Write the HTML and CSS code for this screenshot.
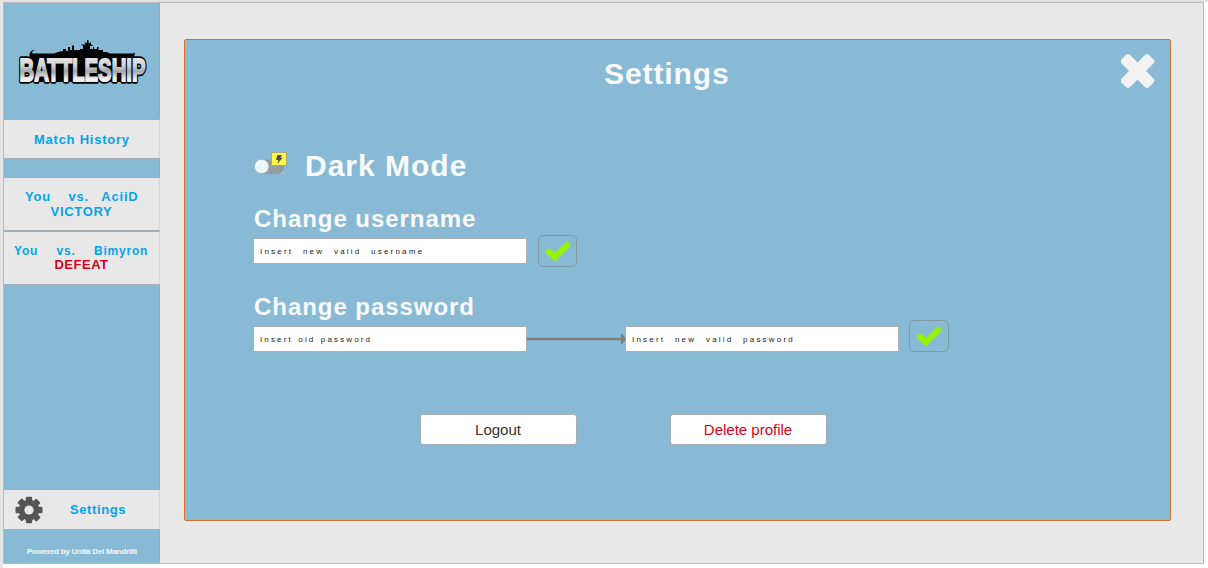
FILE: index.html
```html
<!DOCTYPE html>
<html lang="en">
<head>
<meta charset="utf-8">
<title>Battleship – Settings</title>
<link rel="stylesheet" href="styles.css">
</head>
<body>
<div class="app">
  <aside class="sidebar">
    <div class="brand">
      <svg class="logo" width="136" height="48" viewBox="0 0 136 48" role="img" aria-label="Battleship">
        <defs>
          <linearGradient id="steel" x1="0" y1="0" x2="0" y2="1">
            <stop offset=".2" stop-color="#e4e4e4"/>
            <stop offset=".4" stop-color="#cfd2d4"/>
            <stop offset=".55" stop-color="#a4a7aa"/>
            <stop offset=".76" stop-color="#efefef"/>
          </linearGradient>
        </defs>
        <path fill="#000" d="M14 20 13.500 14 15 11 19 9.500 16 12 16.500 13.500H38L42 12 47 11V9H50V11H52V7H54V10H56V5.500H58V10H64V9H67V5.500H65.500V4.500H70L68 2.500 71 3V0H72.500V3.500L75 2V4.500H76.500V6H74V9H77V7H78V9H81V7H82.500V10H87V12H91L94 13.500H117L119 12.500 118 17 115 20V42H14Z"/>
        <g class="logo-text">
          <text class="logo-edge" x="3.500" y="40.500" textLength="126" lengthAdjust="spacingAndGlyphs">BATTLESHIP</text>
          <text class="logo-face" x="3.500" y="40.500" textLength="126" lengthAdjust="spacingAndGlyphs">BATTLESHIP</text>
        </g>
      </svg>
    </div>
    <div class="side-row history"><span>Match History</span></div>
    <div class="side-gap"></div>
    <div class="side-row match first"><span class="players aciid">You <span class="versus">vs.</span> AciiD</span><span class="result">VICTORY</span></div>
    <div class="side-row match second"><span class="players bimyron">You vs. Bimyron</span><span class="result defeat">DEFEAT</span></div>
    <div class="side-fill"></div>
    <div class="side-row settings">
      <svg class="gear" width="28" height="28" viewBox="-14 -14 28 28">
        <g fill="#555">
          <g id="teeth"><rect x="-3.200" y="-13.300" width="6.400" height="26.600" rx="1.200"/><rect x="-13.500" y="-3.200" width="27" height="6.400" rx="1.200"/></g>
          <use href="#teeth" transform="rotate(45)"/>
          <circle r="10.300"/>
        </g>
        <circle r="4.600" fill="#e8e8e8"/>
      </svg>
      <span>Settings</span>
    </div>
    <div class="powered"><span>Powered by Unità Del Mandrilli</span></div>
  </aside>
  <main class="content">
    <section class="panel">
      <header class="panel-head">
        <h1>Settings</h1>
        <svg class="close" width="34" height="35" viewBox="0 0 34 35">
          <g transform="translate(16.500 17) rotate(45)" fill="#f2f2f2"><rect x="-6" y="-19.500" width="12" height="39" rx="3"/><rect x="-19.500" y="-6" width="39" height="12" rx="3"/></g>
        </svg>
      </header>
      <div class="dark-row">
        <svg width="34" height="24" viewBox="0 0 34 24">
          <path fill="#9ac3d5" d="M2 19H30V22H2Z" opacity=".5"/>
          <rect x="1" y="7.500" width="29" height="14.500" rx="7.250" fill="#939b9f"/>
          <circle cx="7.600" cy="14.500" r="7.200" fill="#edf6fb" stroke="#9eb2bb" stroke-width=".8"/>
          <rect x="17.500" y=".5" width="15" height="13" fill="#fdf84a" stroke="#a9aa78"/>
          <path fill="#4d4d4d" d="M23.300 3H28L26.300 5.800H28.700L23.300 12 24.500 8H22Z"/>
        </svg>
        <h2>Dark Mode</h2>
      </div>
      <h3 class="user-title">Change username</h3>
      <div class="form-row user-row">
        <div class="field">Insert new valid username</div>
        <div class="confirm"><svg width="26" height="20" viewBox="0 0 26 20"><path class="tick" d="M4 11 10 16 22 4.200"/></svg></div>
      </div>
      <h3 class="pass-title">Change password</h3>
      <div class="form-row pass-row">
        <div class="field old">Insert old password</div>
        <svg class="arrow" width="99" height="12" viewBox="0 0 99 12"><path fill="#7d7d7d" d="M0 4.800H94V.5L100 6 94 11.500V7.200H0Z"/></svg>
        <div class="field new">Insert new valid password</div>
        <div class="confirm"><svg width="26" height="20" viewBox="0 0 26 20"><path class="tick" d="M4 11 10 16 22 4.200"/></svg></div>
      </div>
      <div class="actions">
        <button class="btn">Logout</button>
        <button class="btn danger">Delete profile</button>
      </div>
    </section>
  </main>
</div>
</body>
</html>
```
FILE: styles.css
```css
* { box-sizing: border-box; }
html { background: #fff; }
body {
  margin: 0;
  width: 1208px;
  height: 568px;
  overflow: hidden;
  border-top: 2px solid #e2e2e2;
  border-left: 3px solid #e5e5e5;
  font-family: "Liberation Sans", Arial, sans-serif;
}
.app {
  display: flex;
  width: 1201px;
  height: 562px;
  border: 1px solid #bababa;
  background: #e8e8e8;
}
.sidebar {
  display: flex;
  flex-direction: column;
  width: 156px;
  background: #88bad6;
  border-right: 1px solid #9aaab4;
  color: #05a2ec;
  font-weight: bold;
  font-size: 13px;
  letter-spacing: .8px;
  white-space: nowrap;
}
.brand { height: 116px; padding: 37px 0 0 12px; }
.logo { display: block; overflow: visible; }
.logo-text { font: bold 32px "Liberation Sans", Arial, sans-serif; letter-spacing: 0; }
.logo-edge { fill: #000; stroke: #000; stroke-width: 5.5px; stroke-linejoin: round; }
.logo-face { fill: url(#steel); stroke: url(#steel); stroke-width: 2px; }
.side-row {
  display: flex;
  align-items: center;
  background: #e8e8e8;
  border-top: 1px solid #a3aeb5;
  border-bottom: 1px solid #a3aeb5;
  margin-right: -1px;
  border-right: 1px solid #d4d8da;
}
.history { height: 40px; padding: 1px 0 0 30px; letter-spacing: .75px; }
.side-gap { height: 18px; }
.match { flex-direction: column; line-height: 14px; }
.first { height: 54px; padding-top: 11px; line-height: 15px; }
.second { height: 54px; padding-top: 12px; border-top: 1px solid #a3aeb5; }
.players { align-self: flex-start; }
.aciid { padding-left: 21px; word-spacing: 8.5px; }
.versus { margin-left: 4.5px; }
.bimyron { padding-left: 10px; font-size: 12px; word-spacing: 14.2px; }
.result { letter-spacing: .7px; }
.defeat { color: #d9001b; letter-spacing: .5px; }
.side-fill { flex: 1; }
.settings { height: 41px; padding-left: 11px; gap: 27px; letter-spacing: .6px; }
.powered {
  height: 33px;
  padding: 16px 0 0 23px;
  color: #f4f8fa;
  font-size: 8px;
  line-height: 12px;
  letter-spacing: -.24px;
}
.content { flex: 1; padding: 36px 0 0 24px; }
.panel {
  width: 987px;
  height: 482px;
  border: 1px solid #d2732b;
  border-radius: 2px;
  background: #88bad6;
}
h1, h2, h3 { margin: 0; color: #f8fafb; font-weight: bold; letter-spacing: 1px; white-space: nowrap; }
h1, h2 { font-size: 30px; line-height: 34px; }
h1 { padding-top: 3px; letter-spacing: .9px; }
h3 { font-size: 24px; line-height: 28px; margin-left: 69px; letter-spacing: .95px; }
.panel-head { display: flex; justify-content: space-between; padding: 14px 15px 0 419px; height: 111px; }
.dark-row { display: flex; height: 53px; padding-left: 69px; gap: 17px; }
.dark-row svg { margin-top: 1px; }
.dark-row h2 { line-height: 30px; }
.user-title { height: 31px; line-height: 29px; }
.form-row { display: flex; align-items: center; margin-left: 68px; height: 32px; }
.field {
  width: 274px;
  height: 26px;
  padding-left: 6px;
  background: #fff;
  border: 1px solid #a9b1b6;
  color: #222;
  font-size: 8px;
  line-height: 26px;
  letter-spacing: 2.2px;
  word-spacing: 5.3px;
  white-space: nowrap;
}
.old { word-spacing: 1px; letter-spacing: 2.15px; }
.confirm {
  display: grid;
  place-items: center;
  width: 40px;
  height: 32px;
  margin-left: 10px;
  border: 1px solid #8299a5;
  border-radius: 5px;
}
.tick { fill: none; stroke: #95f204; stroke-width: 6.5; stroke-linecap: round; stroke-linejoin: miter; }
.user-row .confirm { align-self: flex-start; width: 39px; margin-left: 11px; }
.pass-title { margin-top: 25px; height: 28px; line-height: 29px; }
.pass-row { align-items: flex-start; padding-top: 6px; height: 40px; }
.pass-row .confirm { margin-top: -6px; }
.arrow { margin: 7px -1px 0 0; }
.actions { display: flex; gap: 93px; padding: 54px 0 0 235px; }
.btn {
  width: 157px;
  height: 31px;
  padding: 0 1px 1px 0;
  background: #fff;
  border: 1px solid #a5aeb3;
  border-radius: 3px;
  color: #333;
  font: 15px "Liberation Sans", Arial, sans-serif;
}
.danger { color: #d9001b; }
```
